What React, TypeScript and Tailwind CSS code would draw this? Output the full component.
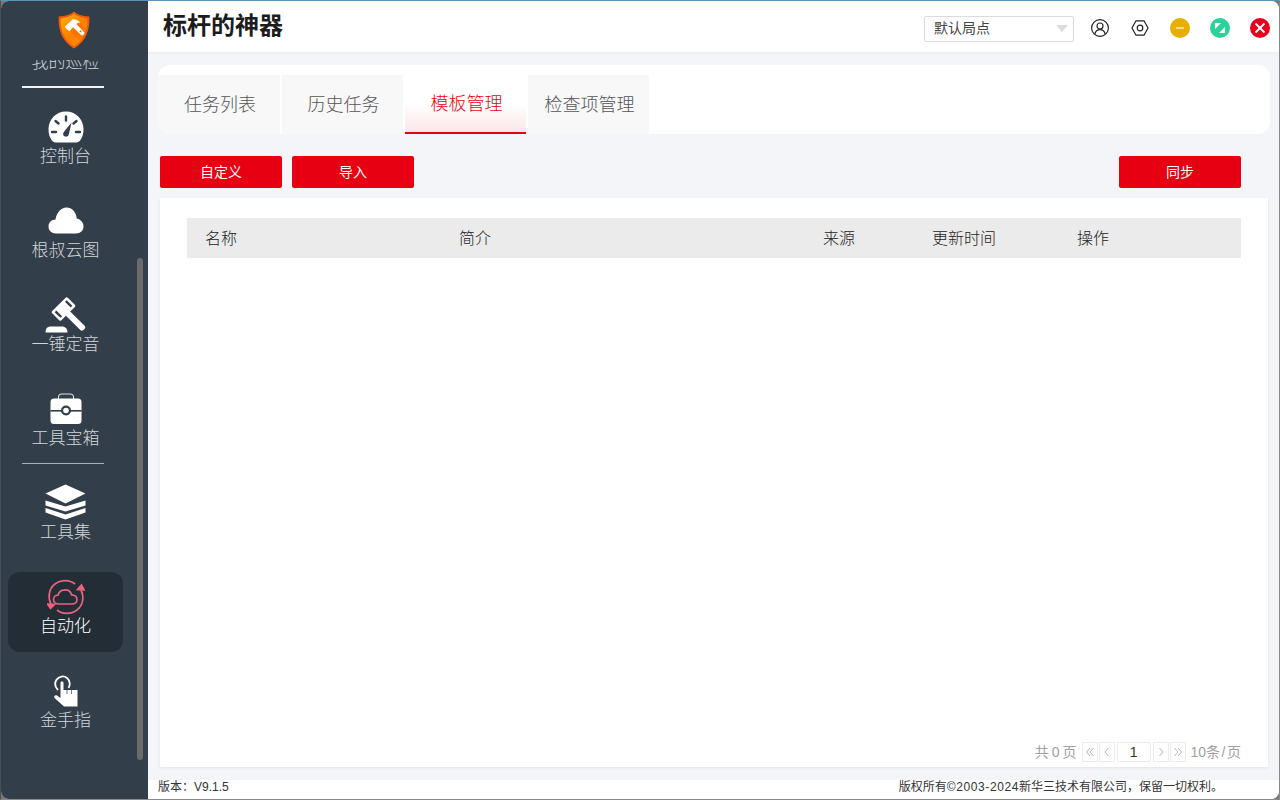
import React from "react";

const CJK = { fontFamily: '"Liberation Sans", "Noto Sans CJK SC", sans-serif' };

function Logo() {
  return (
    <svg width="34" height="38" viewBox="0 0 36 41">
      <defs>
        <linearGradient id="lg1" x1="0" y1="0" x2="1" y2="1">
          <stop offset="0" stopColor="#ffb000" />
          <stop offset="0.55" stopColor="#ff7d00" />
          <stop offset="1" stopColor="#ffa000" />
        </linearGradient>
      </defs>
      <path d="M18 0.5 C21 3.5 27 5.5 34.5 6 C35.5 20 31 33 18 40.5 C5 33 0.5 20 1.5 6 C9 5.5 15 3.5 18 0.5Z" fill="#f05a0a" />
      <path d="M18 3 C21 5.5 26.5 7.5 32.5 8 C33 20 29 31 18 38 C7 31 3 20 3.5 8 C9.5 7.5 15 5.5 18 3Z" fill="url(#lg1)" />
      <path d="M12 20 L26 34 C29 30 31 26 32 21 L24 12Z" fill="#ef6a00" opacity="0.55" />
      <path d="M8 17 L16.5 9 C19.5 8.5 23 10 25 13 C23 12.5 21.5 13 20.5 14 L29 23 C30 24.5 27.5 27.5 25.5 26 L17 17.5 L13 22Z" fill="#fff" />
      <circle cx="25" cy="22" r="1" fill="#f05a0a" />
    </svg>
  );
}

function Gauge() {
  return (
    <svg width="36" height="32" viewBox="0 0 36 32">
      <path d="M18 0.5 C27.7 0.5 35.5 8.3 35.5 18 C35.5 21.5 35 25 33 28 C32 30 30.5 31.5 28 31.5 L8 31.5 C5.5 31.5 4 30 3 28 C1 25 0.5 21.5 0.5 18 C0.5 8.3 8.3 0.5 18 0.5Z" fill="#fff" />
      <g stroke="#323e4a" strokeWidth="2.4" strokeLinecap="round">
        <path d="M18 5.5 V9.5" />
        <path d="M7.5 10 L10.5 12.5" />
        <path d="M28.5 10 L25.5 12.5" />
        <path d="M4 21 H8" />
        <path d="M28 21 H32" />
      </g>
      <path d="M23.5 11.5 L21 22.5 C20.6 25 18.8 26 17.2 25.6 C15.2 25 14.6 23 15.6 21.2Z" fill="#323e4a" />
    </svg>
  );
}

function Cloud() {
  return (
    <svg width="36" height="27" viewBox="0 0 36 27">
      <path d="M8 26.5 C3.5 26.5 0.5 23.5 0.5 19.5 C0.5 15.5 3.5 12.5 7.5 12.5 C8.5 5.5 13 0.5 18.5 0.5 C24 0.5 28 5 28.8 11.5 C32.8 12.5 35.5 15.5 35.5 19.5 C35.5 23.5 32.5 26.5 28 26.5Z" fill="#fff" />
    </svg>
  );
}

function Gavel() {
  return (
    <svg width="41" height="36" viewBox="0 0 41 36">
      <g transform="rotate(-45 18.5 12)">
        <rect x="7.5" y="5.5" width="22" height="13" rx="1.5" fill="#fff" />
        <rect x="10" y="8" width="2.4" height="8" fill="#323e4a" />
        <rect x="24.6" y="8" width="2.4" height="8" fill="#323e4a" />
        <rect x="15.5" y="17" width="6" height="24" rx="2.5" fill="#fff" />
      </g>
      <path d="M0.5 35.5 C0.5 31 3 29.5 6 29.5 L17 29.5 C20.5 29.5 22.5 32 22.5 35.5Z" fill="#fff" />
    </svg>
  );
}

function Toolbox() {
  return (
    <svg width="32" height="32" viewBox="0 0 32 32">
      <path d="M8.5 6 V4 C8.5 2 10 1 12 1 H20 C22 1 23.5 2 23.5 4 V6" fill="none" stroke="#dfe2e5" strokeWidth="1.1" />
      <rect x="0.5" y="5.5" width="31" height="25.5" rx="3.5" fill="#fff" />
      <rect x="0.5" y="17" width="31" height="1.6" fill="#323e4a" />
      <circle cx="16" cy="17.5" r="5" fill="#323e4a" />
      <circle cx="16" cy="17.5" r="2.8" fill="#fff" />
    </svg>
  );
}

function Layers() {
  return (
    <svg width="41" height="37" viewBox="0 0 41 37">
      <path d="M20.5 0.5 L40.5 9.5 L20.5 19.5 L0.5 9.5Z" fill="#fff" />
      <path d="M0.5 16.5 L20.5 22.5 L40.5 16.5 V21.5 L20.5 27.5 L0.5 21.5Z" fill="#fff" />
      <path d="M0.5 24 L20.5 30.5 L40.5 24 V28.5 L20.5 35.5 L0.5 28.5Z" fill="#fff" />
    </svg>
  );
}

function Auto() {
  return (
    <svg width="38" height="36" viewBox="0 0 38 36" fill="none" stroke="#e8647e" strokeWidth="1.7">
      <path d="M4 25 C0.5 18 2 9.5 8 5 C14 0.5 22.5 0.5 28 5" />
      <path d="M34 11 C37.5 18 36 26.5 30 31 C24 35.5 15.5 35.5 10 31" />
      <path d="M0.5 25 L7.5 25.5 L3.5 29.5Z" fill="#e8647e" />
      <path d="M37 11 L30.5 10.5 L34.5 6Z" fill="#e8647e" />
      <path d="M12 25 C8.5 25 6.5 22.8 6.5 20.5 C6.5 18 8.5 16.2 11 16.2 C11.8 12.8 14.5 10.8 18 10.8 C21.5 10.8 24 13 24.6 15.8 C27.8 15.8 30 18 30 20.5 C30 23 28 25 25 25Z" />
    </svg>
  );
}

function Hand() {
  return (
    <svg width="26" height="32" viewBox="0 0 26 32">
      <path d="M5 15 C2 12 1.5 8 3.5 4.8 C6 1 11 0.5 14 3 C17 5.5 17.5 10 15.5 13" fill="none" stroke="#fff" strokeWidth="1.8" />
      <path d="M7.5 7.5 C7.5 6 10.5 6 10.5 7.5 V15 H24.5 V31.5 H11 L1.5 23 C0.5 21.5 2 19.5 4 20.5 L7.5 23Z" fill="#fff" />
      <path d="M14 15 V19 M18.5 15 V19" stroke="#323e4a" strokeWidth="0.7" />
    </svg>
  );
}

type Item = { label: string; icon: React.ReactNode; active?: boolean; divider?: string };

const items: Item[] = [
  { label: "我的巡检", icon: null, divider: "h-[2px] bg-[#f2f3f4]" },
  { label: "控制台", icon: <Gauge /> },
  { label: "根叔云图", icon: <Cloud /> },
  { label: "一锤定音", icon: <Gavel /> },
  { label: "工具宝箱", icon: <Toolbox />, divider: "h-px bg-[#a9b0b6]" },
  { label: "工具集", icon: <Layers /> },
  { label: "自动化", icon: <Auto />, active: true },
  { label: "金手指", icon: <Hand /> },
];

function NavItem({ item }: { item: Item }) {
  return (
    <div
      className={
        "relative h-[80px] w-[115px] mb-[14px] flex flex-col items-center rounded-[12px] " +
        (item.active ? "bg-[#222d36] text-white" : "text-[#d2d6da]")
      }
    >
      <div className="h-[42px] w-full flex items-center justify-center pt-[7px]">{item.icon}</div>
      <div className="text-[17px] leading-[20px] font-light mt-[3px]">{item.label}</div>
      {item.divider ? <div className={"absolute left-[14px] bottom-0 w-[82px] " + item.divider} /> : null}
    </div>
  );
}

function Sidebar() {
  return (
    <aside className="relative w-[147px] h-full bg-[#323e4a] flex flex-col shrink-0 overflow-hidden">
      <div className="h-[59px] shrink-0 flex justify-start pl-[56px] pt-[10px]">
        <Logo />
      </div>
      <div className="flex-1 overflow-hidden">
        <div className="mt-[-52px] pl-[7px]">
          {items.map((it) => (
            <NavItem key={it.label} item={it} />
          ))}
        </div>
      </div>
      <div className="absolute left-[136px] top-[257px] w-[6px] h-[502px] rounded-[3px] bg-[#6b6b6b]" />
    </aside>
  );
}

function Header() {
  return (
    <header className="h-[51px] shrink-0 bg-white flex items-center pl-[15px] pr-[9px] pt-[2px] shadow-[0_1px_2px_rgba(0,0,0,0.04)]">
      <h1 className="text-[24px] leading-[32px] font-bold text-[#1c1c1c] mb-[3px]">标杆的神器</h1>
      <div className="ml-auto flex items-center">
        <div className="mt-[2px] w-[150px] h-[26px] border border-[#dcdcdc] rounded-[2px] flex items-center pl-[9px] pr-[5px] text-[14px] text-[#444]">
          <span>默认局点</span>
          <span className="ml-auto w-0 h-0 border-x-[6px] border-x-transparent border-t-[7px] border-t-[#dcdcdc]" />
        </div>
        <svg className="ml-[16px]" width="20" height="20" viewBox="0 0 20 20" fill="none" stroke="#222" strokeWidth="1.2">
          <circle cx="10" cy="10" r="8.4" />
          <circle cx="10" cy="8" r="3" />
          <path d="M4.8 16 C5.5 13 7.5 11.6 10 11.6 C12.5 11.6 14.5 13 15.2 16" />
        </svg>
        <svg className="ml-[20px]" width="20" height="20" viewBox="0 0 20 20" fill="none" stroke="#222" strokeWidth="1.2">
          <path d="M6 2.8 H14 L18 10 L14 17.2 H6 L2 10Z" />
          <circle cx="10" cy="10" r="2.8" />
        </svg>
        <span className="ml-[20px] w-[20px] h-[20px] rounded-full bg-[#e8ae00] flex items-center justify-center">
          <span className="w-[8px] h-[2px] bg-[#f7dc8a]" />
        </span>
        <span className="ml-[20px] w-[20px] h-[20px] rounded-full bg-[#2bd198] flex items-center justify-center">
          <svg width="12" height="12" viewBox="0 0 12 12">
            <path d="M1 1 H7 L1 7Z M11 11 H5 L11 5Z" fill="#fff" />
          </svg>
        </span>
        <span className="ml-[20px] w-[20px] h-[20px] rounded-full bg-[#e8001c] flex items-center justify-center">
          <svg width="12" height="12" viewBox="0 0 12 12">
            <path d="M1.5 1.5 L10.5 10.5 M10.5 1.5 L1.5 10.5" stroke="#fff" strokeWidth="1.8" />
          </svg>
        </span>
      </div>
    </header>
  );
}

function Tabs() {
  const base = "h-[59px] flex items-center justify-center text-[18px] font-light text-[#555] bg-[#f8f8f8] pt-[1px] pl-[2px]";
  return (
    <div className="mx-[10px] mr-[9px] h-[69px] pt-[10px] bg-white rounded-[12px] flex gap-[2px]">
      <div className={"w-[122px] rounded-bl-[12px] " + base}>任务列表</div>
      <div className={"w-[121px] " + base}>历史任务</div>
      <div className="w-[121px] h-[59px] flex items-center justify-center text-[18px] font-light text-[#e60012] border-b-2 border-[#e60012] bg-gradient-to-b from-white from-50% to-[#fbe6e8] pt-[1px] pl-[2px]">
        模板管理
      </div>
      <div className={"w-[121px] " + base}>检查项管理</div>
    </div>
  );
}

function Btn({ children }: { children: React.ReactNode }) {
  return (
    <button className="w-[122px] h-[32px] bg-[#e60012] rounded-[2px] text-white text-[14px] flex items-center justify-center">
      {children}
    </button>
  );
}

function PageBox({ d }: { d: string }) {
  return (
    <span className="w-[16px] h-[20px] border border-[#ececec] flex items-center justify-center">
      <svg width="12" height="12" viewBox="0 0 12 12" fill="none" stroke="#a8a8a8" strokeWidth="0.9">
        <path d={d} />
      </svg>
    </span>
  );
}

function Table() {
  return (
    <section className="ml-[12px] mr-[11px] h-[569px] bg-white shadow-[0_1px_3px_rgba(0,0,0,0.08)] flex flex-col pl-[27px] pr-[27px] pt-[20px]">
      <div className="h-[40px] bg-[#ebebeb] grid grid-cols-[254px_364px_109px_145px_1fr] items-center pl-[18px] pt-[2px] text-[16px] font-light text-[#222]">
        <span>名称</span>
        <span>简介</span>
        <span>来源</span>
        <span>更新时间</span>
        <span>操作</span>
      </div>
      <div className="flex-1" />
      <div className="h-[20px] mb-[5px] flex items-center justify-end text-[14px] text-[#a0a0a0]">
        <span className="mr-[5px]">
          共<span className="mx-[3px]">0</span>页
        </span>
        <span className="flex gap-px">
          <PageBox d="M6 2 L2.5 6 L6 10 M9.5 2 L6 6 L9.5 10" />
          <PageBox d="M7.5 2 L4 6 L7.5 10" />
        </span>
        <span className="mx-[2px] w-[34px] h-[20px] border border-[#ececec] rounded-[2px] flex items-center justify-center text-[14px] text-[#333]">
          1
        </span>
        <span className="flex gap-px">
          <PageBox d="M4.5 2 L8 6 L4.5 10" />
          <PageBox d="M2.5 2 L6 6 L2.5 10 M6 2 L9.5 6 L6 10" />
        </span>
        <span className="ml-[5px]">
          10条<span className="mx-[1.5px]">/</span>页
        </span>
      </div>
    </section>
  );
}

export default function App() {
  return (
    <div
      className="w-[1280px] h-[800px] overflow-hidden bg-[#777] border-t border-t-[#5f93b5] border-l border-l-[#4a4f55] border-r border-r-[#8a8a8a] border-b border-b-[#8a8a8a]"
      style={CJK}
    >
      <div className="w-full h-full rounded-[8px] overflow-hidden flex bg-[#f4f5f9]">
        <Sidebar />
        <main className="flex-1 min-w-0 flex flex-col">
          <Header />
          <div className="flex-1 pt-[13px]">
            <Tabs />
            <div className="ml-[12px] mr-[38px] mt-[22px] mb-[10px] flex gap-[10px]">
              <Btn>自定义</Btn>
              <Btn>导入</Btn>
              <div className="ml-auto">
                <Btn>同步</Btn>
              </div>
            </div>
            <Table />
          </div>
          <footer className="h-[19px] shrink-0 bg-white flex items-center pl-[10px] pr-[56px] pb-[5px] text-[12px] text-[#333]">
            <span>版本：V9.1.5</span>
            <span className="ml-auto">
              版权所有<span className="tracking-[0.6px]">©2003-2024</span>新华三技术有限公司，保留一切权利。
            </span>
          </footer>
        </main>
      </div>
    </div>
  );
}
